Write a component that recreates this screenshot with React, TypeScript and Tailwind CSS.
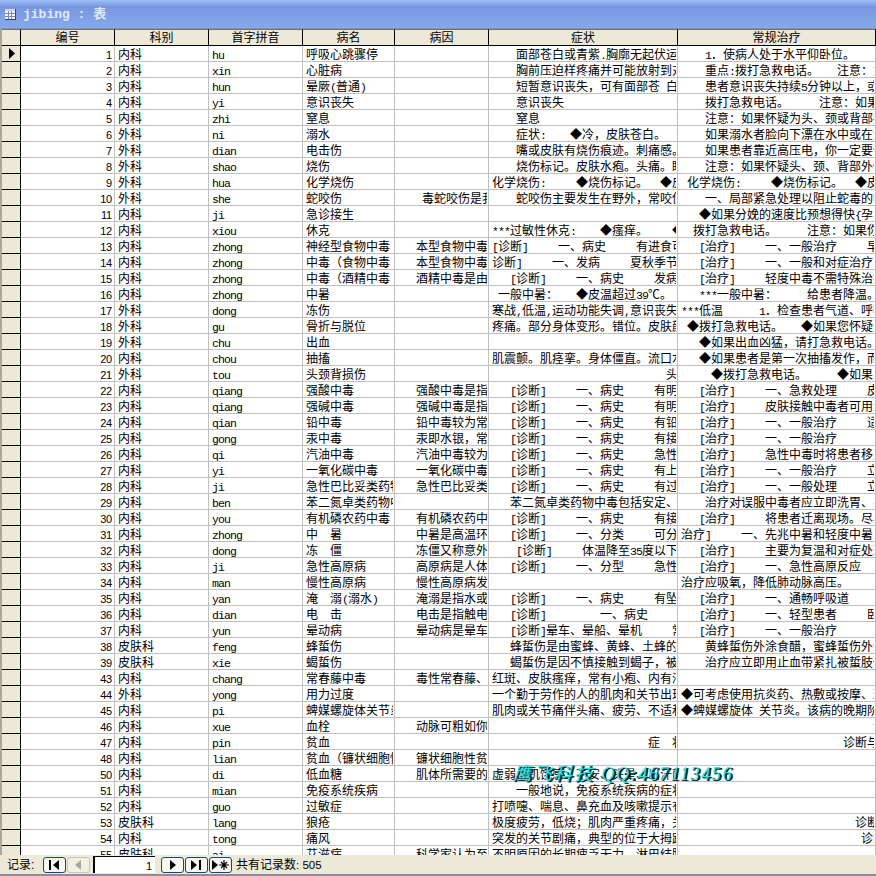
import clsx from "clsx";

type Row = {
  id: number;
  dept: string;
  pinyin: string;
  name: string;
  cause?: string;
  symptom?: string;
  treatment?: string;
};

const HEADERS = ["编号", "科别", "首字拼音", "病名", "病因", "症状", "常规治疗"];

const GRID = "grid grid-cols-[19px_94px_94px_94px_92px_94px_189px_198px]";

const ROWS: Row[] = [
  { id: 1, dept: "内科", pinyin: "hu", name: "呼吸心跳骤停", symptom: "    面部苍白或青紫.胸廓无起伏运", treatment: "    1．使病人处于水平仰卧位。" },
  { id: 2, dept: "内科", pinyin: "xin", name: "心脏病", symptom: "    胸前压迫样疼痛并可能放射到对", treatment: "    重点:拨打急救电话。   注意：如" },
  { id: 3, dept: "内科", pinyin: "hun", name: "晕厥(普通)", symptom: "    短暂意识丧失，可有面部苍 白", treatment: "    患者意识丧失持续5分钟以上，或" },
  { id: 4, dept: "内科", pinyin: "yi", name: "意识丧失", symptom: "    意识丧失", treatment: "    拨打急救电话。     注意：如果" },
  { id: 5, dept: "内科", pinyin: "zhi", name: "窒息", symptom: "    窒息", treatment: "    注意：如果怀疑为头、颈或背部损" },
  { id: 6, dept: "外科", pinyin: "ni", name: "溺水", symptom: "    症状:    ◆冷，皮肤苍白。", treatment: "    如果溺水者脸向下漂在水中或在溺" },
  { id: 7, dept: "外科", pinyin: "dian", name: "电击伤", symptom: "    嘴或皮肤有烧伤痕迹。刺痛感。", treatment: "    如果患者靠近高压电，你一定要保" },
  { id: 8, dept: "外科", pinyin: "shao", name: "烧伤", symptom: "    烧伤标记。皮肤水疱。头痛。眼", treatment: "    注意：如果怀疑头、颈、背部外伤" },
  { id: 9, dept: "外科", pinyin: "hua", name: "化学烧伤", symptom: "化学烧伤:     ◆烧伤标记。  ◆皮", treatment: " 化学烧伤:     ◆烧伤标记。  ◆皮" },
  { id: 10, dept: "外科", pinyin: "she", name: "蛇咬伤", cause: "    毒蛇咬伤是我", symptom: "    蛇咬伤主要发生在野外，常咬伤", treatment: "    一、局部紧急处理以阻止蛇毒的吸" },
  { id: 11, dept: "内科", pinyin: "ji", name: "急诊接生", treatment: "   ◆如果分娩的速度比预想得快{孕" },
  { id: 12, dept: "内科", pinyin: "xiou", name: "休克", symptom: "***过敏性休克:    ◆瘙痒。    ◆", treatment: "  拨打急救电话。     注意：如果你" },
  { id: 13, dept: "内科", pinyin: "zhong", name: "神经型食物中毒", cause: "   本型食物中毒", symptom: "[诊断]     一、病史     有进食可", treatment: "   [治疗]     一、一般治疗     早" },
  { id: 14, dept: "内科", pinyin: "zhong", name: "中毒（食物中毒", cause: "   本型食物中毒", symptom: "诊断]     一、发病     夏秋季节", treatment: "   [治疗]     一、一般和对症治疗" },
  { id: 15, dept: "内科", pinyin: "zhong", name: "中毒（酒精中毒", cause: "   酒精中毒是由", symptom: "   [诊断]     一、病史     发病", treatment: "   [治疗]     轻度中毒不需特殊治疗" },
  { id: 16, dept: "内科", pinyin: "zhong", name: "中暑", symptom: " 一般中暑：   ◆皮温超过39℃。", treatment: "   ***一般中暑：     给患者降温。" },
  { id: 17, dept: "外科", pinyin: "dong", name: "冻伤", symptom: "寒战,低温,运动功能失调,意识丧失", treatment: "***低温      1．检查患者气道、呼吸" },
  { id: 18, dept: "外科", pinyin: "gu", name: "骨折与脱位", symptom: "疼痛。部分身体变形。错位。皮肤颜", treatment: " ◆拨打急救电话。   ◆如果您怀疑是" },
  { id: 19, dept: "外科", pinyin: "chu", name: "出血", treatment: "   ◆如果出血凶猛，请打急救电话。" },
  { id: 20, dept: "内科", pinyin: "chou", name: "抽搐", symptom: "肌震颤。肌痉挛。身体僵直。流口水", treatment: "   ◆如果患者是第一次抽搐发作，而" },
  { id: 21, dept: "外科", pinyin: "tou", name: "头颈背损伤", symptom: "                             头", treatment: "     ◆拨打急救电话。     ◆如果" },
  { id: 22, dept: "内科", pinyin: "qiang", name: "强酸中毒", cause: "   强酸中毒是指", symptom: "   [诊断]     一、病史     有明", treatment: "   [治疗]     一、急救处理     皮" },
  { id: 23, dept: "内科", pinyin: "qiang", name: "强碱中毒", cause: "   强碱中毒是指", symptom: "   [诊断]     一、病史     有明", treatment: "   [治疗]     皮肤接触中毒者可用清" },
  { id: 24, dept: "内科", pinyin: "qian", name: "铅中毒", cause: "   铅中毒较为常", symptom: "   [诊断]     一、病史     有铅", treatment: "   [治疗]     一、一般治疗     适" },
  { id: 25, dept: "内科", pinyin: "gong", name: "汞中毒", cause: "   汞即水银，常", symptom: "   [诊断]     一、病史     有接", treatment: "   [治疗]     一、一般治疗" },
  { id: 26, dept: "内科", pinyin: "qi", name: "汽油中毒", cause: "   汽油中毒较为", symptom: "   [诊断]     一、病史     急性", treatment: "   [治疗]     急性中毒时将患者移至" },
  { id: 27, dept: "内科", pinyin: "yi", name: "一氧化碳中毒", cause: "   一氧化碳中毒", symptom: "   [诊断]     一、病史     有上", treatment: "   [治疗]     一、一般治疗     立" },
  { id: 28, dept: "内科", pinyin: "ji", name: "急性巴比妥类药物", cause: "   急性巴比妥类", symptom: "   [诊断]     一、病史     有过", treatment: "   [治疗]     一、一般处理     立" },
  { id: 29, dept: "内科", pinyin: "ben", name: "苯二氮卓类药物中", symptom: "   苯二氮卓类药物中毒包括安定、", treatment: "    治疗对误服中毒者应立即洗胃、导" },
  { id: 30, dept: "内科", pinyin: "you", name: "有机磷农药中毒", cause: "   有机磷农药中", symptom: "   [诊断]     一、病史     有接", treatment: "   [治疗]     将患者迁离现场。尽早" },
  { id: 31, dept: "内科", pinyin: "zhong", name: "中  暑", cause: "   中暑是高温环", symptom: "   [诊断]     一、分类     可分", treatment: "治疗]     一、先兆中暑和轻度中暑" },
  { id: 32, dept: "内科", pinyin: "dong", name: "冻  僵", cause: "   冻僵又称意外", symptom: "    [诊断]     体温降至35度以下", treatment: "   [治疗]     主要为复温和对症处理" },
  { id: 33, dept: "内科", pinyin: "ji", name: "急性高原病", cause: "   高原病是人体", symptom: "   [诊断]     一、分型     急性", treatment: "   [治疗]     一、急性高原反应" },
  { id: 34, dept: "内科", pinyin: "man", name: "慢性高原病", cause: "   慢性高原病发", treatment: "治疗应吸氧，降低肺动脉高压。" },
  { id: 35, dept: "内科", pinyin: "yan", name: "淹  溺(溺水)", cause: "   淹溺是指水或", symptom: "   [诊断]     一、病史     有坠", treatment: "   [治疗]     一、通畅呼吸道" },
  { id: 36, dept: "内科", pinyin: "dian", name: "电  击", cause: "   电击是指触电", symptom: "   [诊断]         一、病史", treatment: "   [治疗]     一、轻型患者     卧" },
  { id: 37, dept: "内科", pinyin: "yun", name: "晕动病", cause: "   晕动病是晕车", symptom: "   [诊断]晕车、晕船、晕机     常", treatment: "   [治疗]     一、一般治疗      ." },
  { id: 38, dept: "皮肤科", pinyin: "feng", name: "蜂蜇伤", symptom: "   蜂蜇伤是由蜜蜂、黄蜂、土蜂的", treatment: "    黄蜂蜇伤外涂食醋，蜜蜂蜇伤外涂" },
  { id: 39, dept: "皮肤科", pinyin: "xie", name: "蝎蜇伤", symptom: "   蝎蜇伤是因不慎接触到蝎子，被", treatment: "    治疗应立即用止血带紧扎被蜇肢体" },
  { id: 43, dept: "内科", pinyin: "chang", name: "常春藤中毒", cause: "   毒性常春藤、", symptom: "红斑、皮肤瘙痒，常有小疱、内有液" },
  { id: 44, dept: "外科", pinyin: "yong", name: "用力过度", symptom: "一个勤于劳作的人的肌肉和关节出现", treatment: "◆可考虑使用抗炎药、热敷或按摩、理" },
  { id: 45, dept: "内科", pinyin: "pi", name: "蜱媒螺旋体关节炎", symptom: "肌肉或关节痛伴头痛、疲劳、不适和", treatment: "◆蜱媒螺旋体 关节炎。该病的晚期阶" },
  { id: 46, dept: "内科", pinyin: "xue", name: "血栓", cause: "   动脉可粗如你", treatment: "                                诊" },
  { id: 47, dept: "内科", pinyin: "pin", name: "贫血", symptom: "                          症  状", treatment: "                           诊断与" },
  { id: 48, dept: "内科", pinyin: "lian", name: "贫血（镰状细胞性", cause: "   镰状细胞性贫" },
  { id: 50, dept: "内科", pinyin: "di", name: "低血糖", cause: "   肌体所需要的", symptom: "虚弱、饥饿感、不安、头晕、出汗面" },
  { id: 51, dept: "内科", pinyin: "mian", name: "免疫系统疾病", symptom: "    一般地说，免疫系统疾病的症状" },
  { id: 52, dept: "内科", pinyin: "guo", name: "过敏症", symptom: "打喷嚏、喘息、鼻充血及咳嗽提示有" },
  { id: 53, dept: "皮肤科", pinyin: "lang", name: "狼疮", symptom: "极度疲劳，低烧；肌肉严重疼痛，关", treatment: "                             诊断" },
  { id: 54, dept: "内科", pinyin: "tong", name: "痛风", symptom: "突发的关节剧痛，典型的位于大拇趾", treatment: "                              诊断" },
  { id: 55, dept: "皮肤科", pinyin: "ai", name: "艾滋病", cause: "   科学家认为至", symptom: "不明原因的长期疲乏无力，淋巴结肿" },
];

// Half-width characters take 6px, full-width ones 12px
function CellText({ text = "" }: { text?: string }) {
  const runs = text.match(/[\x20-\x7e]+|[^\x20-\x7e]+/g) || [];
  return (
    <>
      {runs.map((run, i) =>
        run.charCodeAt(0) < 127 ? (
          <span
            key={i}
            className="font-['Liberation_Mono',monospace] text-[11.5px] tracking-[-0.901px]"
          >
            {run}
          </span>
        ) : (
          <span key={i}>{run}</span>
        )
      )}
    </>
  );
}

function Cell({ text }: { text?: string }) {
  return (
    <div className="h-4 border-r border-b border-[#c0c0c0] pr-px pl-[3px]">
      <div className="h-[15px] overflow-hidden leading-4 whitespace-pre">
        <CellText text={text} />
      </div>
    </div>
  );
}

function TitleBar() {
  return (
    <div className="flex h-[29px] items-center gap-[7px] border-b border-[#8f8fae] bg-linear-to-b from-[#9dc0f5] via-[#7a95df] via-25% to-[#84aaee] pl-[5px]">
      <svg width="11" height="11" viewBox="0 0 11 11">
        <rect width="11" height="11" fill="#33457c" />
        <rect width="10" height="10" fill="#f4f6fc" />
        <rect width="10" height="2" fill="#c9d6f2" />
        <path d="M0 4.5H10M0 7.5H10M3.5 2V10M6.5 2V10" stroke="#7c8cba" strokeWidth="1" />
      </svg>
      <h1 className="text-[13px] font-bold whitespace-pre text-[#dfeafc]">
        <span className="font-['Liberation_Mono',monospace]">{"jibing : "}</span>表
      </h1>
    </div>
  );
}

function NavButton({ disabled, children }: { disabled?: boolean; children: React.ReactNode }) {
  return (
    <button
      className={clsx(
        "flex h-4 w-[23px] items-center justify-center rounded-[3px] border",
        disabled ? "border-[#c9c7ba] bg-[#f2f0e5] text-[#aca899]" : "border-[#1c4670] bg-[#f8f7f2] text-black"
      )}
    >
      <svg className="shrink-0" width="19" height="12" viewBox="0 0 19 12" fill="currentColor">
        {children}
      </svg>
    </button>
  );
}

function RecordNavigator() {
  return (
    <div className="flex h-[21px] items-center border-b-2 border-[#8d8ba0] bg-[#ece9d8] pl-[7px] text-[12px]">
      <span className="w-[36px] whitespace-pre">
        记录<span className="font-['Liberation_Sans',sans-serif]">:</span>
      </span>
      <NavButton>
        <path d="M4 1h2v10H4zM14 1v10L8 6z" />
      </NavButton>
      <div className="ml-px">
        <NavButton disabled>
          <path d="M12 1v10L6 6z" />
        </NavButton>
      </div>
      <div className="ml-[3px] h-[17px] w-[62px] border-t border-l-2 border-black bg-white pr-[3px] text-right font-['Liberation_Sans',sans-serif] text-[11px] leading-[18px]">
        1
      </div>
      <div className="ml-[6px] flex gap-px">
        <NavButton>
          <path d="M7 1v10l6-5z" />
        </NavButton>
        <NavButton>
          <path d="M4 1v10l6-5zM12 1h2v10h-2z" />
        </NavButton>
        <NavButton>
          <path d="M1 1v10l6-5z" />
          <path d="M8 6h10M13 1v10M10 3l6 6M16 3l-6 6" stroke="currentColor" strokeWidth="1.2" />
        </NavButton>
      </div>
      <span className="ml-[4px] whitespace-pre">
        共有记录数<span className="font-['Liberation_Sans',sans-serif] text-[11.500px]">: 505</span>
      </span>
    </div>
  );
}

export default function App() {
  return (
    <div className="relative flex h-[876px] w-[876px] flex-col overflow-hidden bg-[#ece9d8] font-['Noto_Sans_CJK_SC',sans-serif] text-[12px] leading-4 text-black">
      <TitleBar />
      <div className="h-[826px] overflow-hidden border-l-2 border-[#aca899] bg-white">
        <div className={GRID}>
          <div className="h-[17px] border-t border-r border-b border-black border-t-[#716f64] bg-[#ece9d8]" />
          {HEADERS.map((header) => (
            <div
              key={header}
              className="h-[17px] border-t border-r border-b border-black border-t-[#716f64] bg-[#ece9d8] text-center leading-[14px]"
            >
              {header}
            </div>
          ))}
        </div>
        {ROWS.map((row, i) => (
          <div key={row.id} className={GRID}>
            <div className="h-4 border-r border-b border-black bg-[#ece9d8]">
              {i === 0 && (
                <svg width="18" height="15" viewBox="0 0 18 15">
                  <path d="M7 2v11l6-5.500z" />
                </svg>
              )}
            </div>
            <div className="h-4 border-r border-b border-[#c0c0c0] pr-[2px] text-right font-['Liberation_Sans',sans-serif] text-[11px] leading-[18px] tracking-[-0.2px]">
              {row.id}
            </div>
            <Cell text={row.dept} />
            <Cell text={row.pinyin} />
            <Cell text={row.name} />
            <Cell text={row.cause} />
            <Cell text={row.symptom} />
            <Cell text={row.treatment} />
          </div>
        ))}
      </div>
      <RecordNavigator />
      <div className="absolute top-[762px] left-[513px] font-['Liberation_Serif','Noto_Sans_CJK_SC',serif] text-[18px] leading-6 tracking-[1.7px] whitespace-pre text-[#30e4e4] italic [text-shadow:1px_1px_0_#003038,2px_1px_0_#001014]">
        <span className="tracking-[2.500px]">鹰飞科技</span> QQ:467113456
      </div>
    </div>
  );
}
